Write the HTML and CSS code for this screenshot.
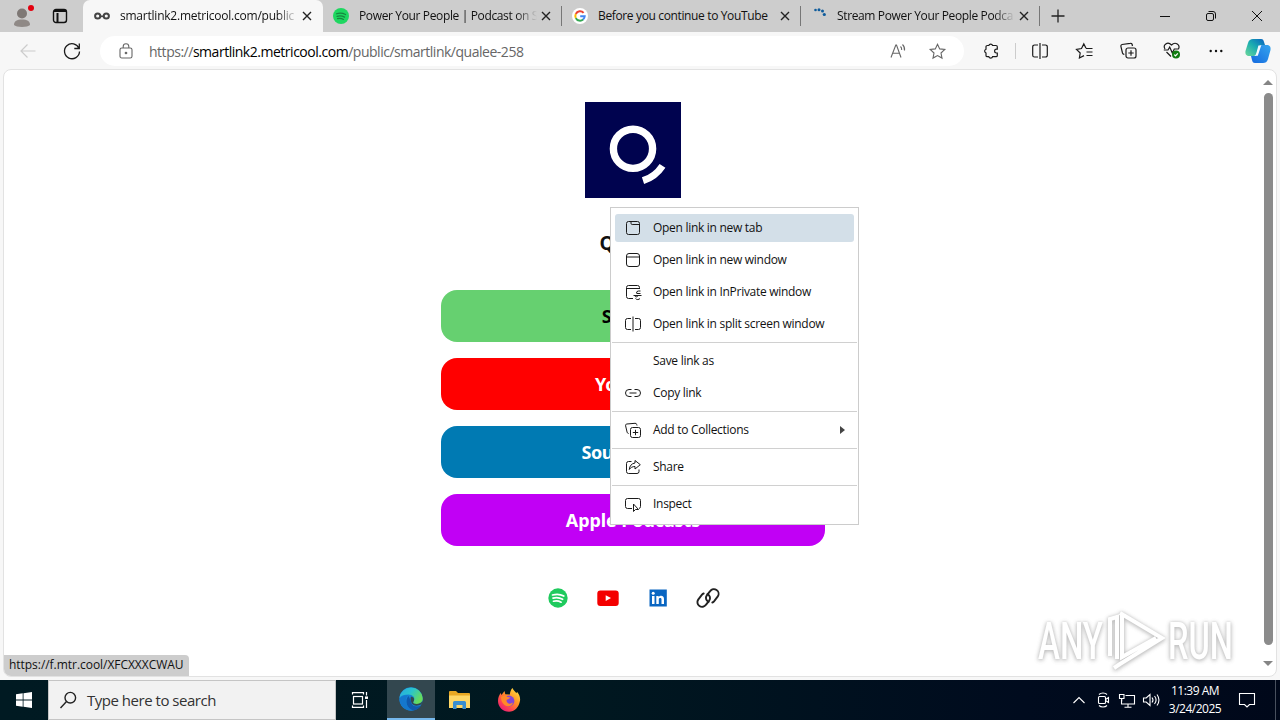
FILE: index.html
```html
<!DOCTYPE html>
<html lang="en">
<head>
    <meta charset="UTF-8">
    <meta name="viewport" content="width=device-width, initial-scale=1.0">
    <title>Qualee</title>
    <link rel="stylesheet" href="styles.css">
</head>
<body>
    <header class="tab-bar">
        <div class="profile">
            <svg width="26" height="26" viewBox="0 0 26 26">
                <circle cx="13" cy="10.500" r="5" fill="#7e7875"/>
                <path d="M5 22c0-4 3-5.500 8-5.500s8 1.500 8 5.500c-2 2.500-14 2.500-16 0z" fill="#8f8986"/>
                <circle cx="22" cy="5" r="3" fill="#e3000f"/>
            </svg>
        </div>
        <div class="tab-actions">
            <svg width="16" height="16" viewBox="0 0 16 16" fill="none" stroke="#111">
                <rect x="1.500" y="1.500" width="13" height="13" rx="2.500" stroke-width="1.400"/>
                <path d="M2 3h12M5.500 5v9" stroke-width="2"/>
            </svg>
        </div>
        <div class="tab active">
            <svg class="favicon" width="16" height="16" viewBox="0 0 16 16" fill="none" stroke="#444" stroke-width="2">
                <circle cx="3.700" cy="8" r="2.600"/>
                <circle cx="12.300" cy="8" r="2.600"/>
                <path d="M6 7.500c1 1.200 3 1.200 4 0" stroke-width="1.600"/>
            </svg>
            <span class="tab-title title-host">smartlink2.metricool.com/public</span>
            <svg class="close" width="10" height="10" viewBox="0 0 10 10"><path d="M1 1l8 8M9 1l-8 8"/></svg>
        </div>
        <div class="tab">
            <svg class="favicon" width="16" height="16" viewBox="0 0 16 16">
                <circle cx="8" cy="8" r="8" fill="#1ed760"/>
                <path d="M3.500 5.800c3-.9 6.500-.6 9 .8M4 8.300c2.600-.7 5.400-.4 7.600.8M4.500 10.700c2.200-.5 4.200-.3 6 .7" fill="none" stroke="#17873f" stroke-width="1.200" stroke-linecap="round"/>
            </svg>
            <span class="tab-title">Power Your People | Podcast on S</span>
            <svg class="close" width="10" height="10" viewBox="0 0 10 10"><path d="M1 1l8 8M9 1l-8 8"/></svg>
        </div>
        <div class="tab">
            <svg class="favicon" width="16" height="16" viewBox="0 0 16 16">
                <circle cx="8" cy="8" r="8" fill="#fff"/>
                <g fill="none" stroke-width="2">
                    <path d="M11.600 4.900A4.700 4.700 0 0 0 3.800 6" stroke="#ea4335"/>
                    <path d="M3.800 6a4.700 4.700 0 0 0 0 4.100" stroke="#fbbc05"/>
                    <path d="M3.800 10.100a4.700 4.700 0 0 0 7.300 1.400" stroke="#34a853"/>
                    <path d="M11.100 11.500A4.700 4.700 0 0 0 12.700 8.300H8.200" stroke="#4285f4"/>
                </g>
            </svg>
            <span class="tab-title title-google">Before you continue to YouTube</span>
            <svg class="close" width="10" height="10" viewBox="0 0 10 10"><path d="M1 1l8 8M9 1l-8 8"/></svg>
        </div>
        <div class="tab">
            <svg class="favicon" width="16" height="16" viewBox="0 0 16 16" fill="#0f5c9c">
                <circle cx="4.500" cy="2" r="1.300"/>
                <circle cx="8" cy="1.700" r="1.500"/>
                <circle cx="11.500" cy="3" r="1.500"/>
                <circle cx="13.300" cy="6.500" r="1.600"/>
            </svg>
            <span class="tab-title">Stream Power Your People Podca</span>
            <svg class="close" width="10" height="10" viewBox="0 0 10 10"><path d="M1 1l8 8M9 1l-8 8"/></svg>
        </div>
        <div class="new-tab">
            <svg width="14" height="14" viewBox="0 0 14 14"><path d="M7 .5v13M.5 7h13" stroke="#222" stroke-width="1.300"/></svg>
        </div>
        <div class="window-buttons">
            <span><svg width="10" height="10" viewBox="0 0 10 10"><path d="M0 5.500h10"/></svg></span>
            <span><svg width="10" height="10" viewBox="0 0 10 10"><rect x=".5" y="2.500" width="7" height="7" rx="1.500"/><path d="M2.500 .5h4.500a2.500 2.500 0 0 1 2.500 2.500v4.500"/></svg></span>
            <span><svg width="10" height="10" viewBox="0 0 10 10"><path d="M0 0l10 10M10 0L0 10"/></svg></span>
        </div>
    </header>

    <nav class="toolbar">
        <div class="tool">
            <svg class="disabled" width="16" height="16" viewBox="0 0 16 16"><path d="M15.500 8H1M7.500 1.500L1 8l6.500 6.500"/></svg>
        </div>
        <div class="tool">
            <svg width="18" height="18" viewBox="0 0 18 18"><path d="M16 6.500A7.500 7.500 0 1 0 16.500 9.500M16.300 1.500v5h-5" stroke-width="1.300"/></svg>
        </div>
        <div class="address">
            <svg class="lock" width="14" height="16" viewBox="0 0 14 16"><rect x="1" y="5" width="12" height="10" rx="1.800"/><path d="M4.200 5V3.500a2.800 2.800 0 0 1 5.600 0V5"/><circle cx="7" cy="10" r=".8" fill="#666"/></svg>
            <span class="url">https://<b>smartlink2.metricool.com</b>/public/smartlink/qualee-258</span>
            <svg class="read-aloud" width="17" height="16" viewBox="0 0 17 16"><path d="M1 14.500L5.800 2h.7L11 14.500M2.700 10.300h6.800M10.500 3.500c1 .9 1.300 2 1.200 3.500M12.500 1.500c1.700 1.600 2.400 3.500 2 6"/></svg>
            <svg class="star" width="17" height="17" viewBox="0 0 17 17"><path d="M8.500 1.200l2.200 4.700 5.100.6-3.800 3.500 1 5.100-4.500-2.500L4 15.100l1-5.100L1.200 6.500l5.100-.6z"/></svg>
        </div>
        <div class="tool extensions">
            <svg width="16" height="16" viewBox="0 0 16 16"><path d="M5.800 2.500A2 2 0 0 1 9.600 2.500H13a1.300 1.300 0 0 1 1.300 1.300V6.200h-.8a1.900 1.900 0 0 0 0 3.800h.8v2.400a1.300 1.300 0 0 1-1.300 1.300H9.600a2 2 0 0 1-3.800 0H4.300A1.300 1.300 0 0 1 3 12.400V10a2 2 0 0 1 0-3.800V3.800a1.300 1.300 0 0 1 1.300-1.300z"/></svg>
        </div>
        <div class="divider"></div>
        <div class="tool">
            <svg width="16" height="16" viewBox="0 0 16 16"><path d="M6 2H2.500A1.800 1.800 0 0 0 .7 3.800v8.400A1.800 1.800 0 0 0 2.500 14H6M10 2h3.500a1.800 1.800 0 0 1 1.800 1.800v8.400a1.800 1.800 0 0 1-1.800 1.800H10M8 0v16"/></svg>
        </div>
        <div class="tool">
            <svg width="17" height="16" viewBox="0 0 17 16"><path d="M10 5.200L7.800.9 5.500 5.500l-5 .8L4.200 10l-.8 5L8 12.600M10 5.500h6.500M10.500 9h6M10.500 12.500h6"/></svg>
        </div>
        <div class="tool">
            <svg width="17" height="17" viewBox="0 0 17 17"><rect x="6" y="6" width="10" height="10" rx="2"/><path d="M11 8.300v5.400M8.300 11h5.400M12.500 4l-.4-1.500A1.500 1.500 0 0 0 10.300 1.300L2 2.500A1.500 1.500 0 0 0 .9 4.300L2.500 11a1.800 1.800 0 0 0 1.800 1.300"/></svg>
        </div>
        <div class="tool">
            <svg width="18" height="17" viewBox="0 0 18 17"><path d="M2 7C-.5 3 4.500-1 8.500 3c4-4 9 0 7 4M.8 8H5l1.700-3 2.600 6 2-4h4.500M3.500 10l4.500 4.500"/><circle cx="13" cy="12.500" r="4" fill="#107c10" stroke="none"/><path d="M11.200 12.600l1.300 1.200 2.300-2.500" stroke="#fff"/></svg>
        </div>
        <div class="tool">
            <svg width="14" height="4" viewBox="0 0 14 4"><g fill="#111" stroke="none"><circle cx="1.700" cy="2" r="1.200"/><circle cx="7" cy="2" r="1.200"/><circle cx="12.300" cy="2" r="1.200"/></g></svg>
        </div>
        <div class="tool copilot">
            <svg width="26" height="24" viewBox="0 0 26 24">
                <defs>
                    <linearGradient id="copilot-left" x1="0" y1="1" x2="1" y2="0">
                        <stop offset="0" stop-color="#6dd89a"/>
                        <stop offset=".5" stop-color="#1badb0"/>
                        <stop offset="1" stop-color="#075fc0"/>
                    </linearGradient>
                    <linearGradient id="copilot-right" x1="0" y1="1" x2="1" y2="0">
                        <stop offset="0" stop-color="#1469df"/>
                        <stop offset="1" stop-color="#35a5ee"/>
                    </linearGradient>
                </defs>
                <g stroke="none">
                    <path d="M8 0h8c2 0 2.500 1 3 3l1 3h-3c-2 0-3 1-3.600 3l-1.700 5c-.6 2-1.500 3-3 3H4c-3 0-4-2.500-3.500-5L3 4C4 1 5.500 0 8 0z" fill="url(#copilot-left)"/>
                    <path d="M18 24h-8c-2 0-2.500-1-3-3l-1-4h3c2 0 3-1 3.600-3l1.700-5c.6-2 1.500-3 3-3H22c3 0 4 2.500 3.500 5L23 20c-1 3-2.500 4-5 4z" fill="url(#copilot-right)"/>
                    <path d="M13.400 6.500h2.800l-3.400 10.300H9.500c1-.5 1.500-1.500 1.900-2.800z" fill="#f4faff"/>
                </g>
            </svg>
        </div>
    </nav>

    <main class="viewport">
        <div class="page">
            <svg class="logo" width="96" height="96" viewBox="0 0 96 96">
                <rect width="96" height="96" fill="#00034f"/>
                <circle cx="48" cy="46.800" r="19.600" fill="none" stroke="#fff" stroke-width="7.400"/>
                <path d="M58 78.700A37 37 0 0 0 77.500 63.800" fill="none" stroke="#fff" stroke-width="7"/>
            </svg>
            <h1>Qualee</h1>
            <div class="links">
                <a class="link spotify">Spotify</a>
                <a class="link youtube">YouTube</a>
                <a class="link soundcloud">SoundCloud</a>
                <a class="link apple">Apple Podcasts</a>
            </div>
            <div class="socials">
                <svg width="24" height="24" viewBox="0 0 24 24">
                    <circle cx="12" cy="12" r="9.700" fill="#1fca5d"/>
                    <path d="M6.500 9c4-1.100 8-.8 11.300 1.100M7 12.100c3.300-.9 6.700-.5 9.600 1.200M7.500 15.200c2.700-.7 5.300-.4 7.600 1" fill="none" stroke="#fff" stroke-width="1.700" stroke-linecap="round"/>
                </svg>
                <svg width="24" height="24" viewBox="0 0 24 24">
                    <rect x="1.300" y="4.500" width="21.400" height="15.500" rx="3" fill="#f40000"/>
                    <path d="M9.700 9.200v5.800l5.300-2.900z" fill="#fff"/>
                </svg>
                <svg width="24" height="24" viewBox="0 0 24 24">
                    <rect x="3.500" y="3.500" width="17.300" height="17" fill="#0a66c2"/>
                    <path d="M6 10h2.500v8H6zM10.300 10h2.400v1.200c1.200-2 5.300-2 5.300 1.800v5h-2.500v-4.500c0-2-2.700-1.900-2.700 0V18h-2.500z" fill="#fff"/>
                    <circle cx="7.200" cy="7.200" r="1.500" fill="#fff"/>
                </svg>
                <svg width="24" height="24" viewBox="0 0 24 24" fill="none" stroke="#222" stroke-width="1.900" stroke-linecap="round">
                    <path d="M12.500 15.900a4.300 4.300 0 0 1-1.700-6.500l3.300-4.200a4.600 4.600 0 0 1 7.700 5.200l-3.800 4.900c-.5.600-1 1-1.700 1.200"/>
                    <path d="M11.500 8.100a4.300 4.300 0 0 1 1.700 6.500l-3.300 4.200a4.600 4.600 0 0 1-7.700-5.200L6 8.700c.5-.6 1-1 1.700-1.200"/>
                </svg>
            </div>
        </div>
        <div class="scrollbar">
            <span class="arrow-up"></span>
            <span class="thumb"></span>
            <span class="arrow-down"></span>
        </div>
        <div class="status">https://f.mtr.cool/XFCXXXCWAU</div>
    </main>

    <footer class="taskbar">
        <div class="task start">
            <svg width="16" height="16" viewBox="0 0 16 16" fill="#fff"><path d="M0 2.200L6.700 1.300v6.300H0zM7.500 1.200L16 0v7.600H7.500zM0 8.400h6.700v6.300L0 13.800zM7.500 8.400H16V16l-8.500-1.200z"/></svg>
        </div>
        <div class="search">
            <svg width="17" height="18" viewBox="0 0 17 18" fill="none" stroke="#222" stroke-width="1.400"><circle cx="10.300" cy="6.700" r="5.300"/><path d="M6.500 10.600L.5 17"/></svg>
            <span>Type here to search</span>
        </div>
        <div class="task">
            <svg width="17" height="16" viewBox="0 0 17 16" fill="none" stroke="#fff" stroke-width="1.200"><rect x="1.500" y="4.500" width="9" height="7.500"/><path d="M.5 2.500V.6h11v1.900M.5 13.500v1.900h11v-1.900M14.500 0v3.500M14.500 8v8"/><path d="M13 5.700h3" stroke-width="2.500"/></svg>
        </div>
        <div class="task open">
            <svg width="24" height="24" viewBox="0 0 24 24">
                <defs>
                    <linearGradient id="edge-top" x1="0" y1="0" x2="1" y2=".5">
                        <stop offset="0" stop-color="#2aa8df"/>
                        <stop offset=".5" stop-color="#29c3cf"/>
                        <stop offset="1" stop-color="#68dc5a"/>
                    </linearGradient>
                </defs>
                <circle cx="12" cy="12" r="11.700" fill="#1583d6"/>
                <path d="M.4 11A11.700 11.700 0 0 1 23.700 11c.3 4-2.700 6-6.200 6-3 0-4-1-3-2.400 2.500-4-1-7-5-7C5.500 7.600 2 8.500.4 11z" fill="url(#edge-top)"/>
                <path d="M9.500 8.200C5 10 5.500 20 14 23.400 8 24.500 1 19.500.4 12c1.800-3 5-4.200 9.100-3.800z" fill="#1577cd"/>
                <path d="M9.500 9c-4 4-2 13 5 14.400 3.500-.6 6-2.500 7.500-5-4 2-8.500 1-9.500-2.200-.7-2.500-1.500-4.500-3-7.200z" fill="#1059ad"/>
                <path d="M12 9.700c2.800 0 4 2.300 2.500 4.900-1 1.400 0 2.400 3 2.400 2.500 0 4.700-1 5.700-2.700l-.5 2.700c-4 2.700-9.200 1.900-10.200-1.200-.6-2-1.500-4.500-.5-6.100z" fill="#33474f"/>
            </svg>
        </div>
        <div class="task">
            <svg width="22" height="20" viewBox="0 0 22 20">
                <path d="M0 2a1 1 0 0 1 1-1h6l2 2h11a1 1 0 0 1 1 1v14H0z" fill="#e9a823"/>
                <path d="M0 5.500h21V18H0z" fill="#ffd766"/>
                <path d="M4 19v-6.500A1.500 1.500 0 0 1 5.500 11h10a1.500 1.500 0 0 1 1.500 1.500V19h-3.500v-4h-6v4z" fill="#398ed0"/>
            </svg>
        </div>
        <div class="task firefox">
            <svg width="24" height="24" viewBox="0 0 24 24">
                <defs>
                    <linearGradient id="fox" x1="1" y1="0" x2=".2" y2="1">
                        <stop offset="0" stop-color="#fff04a"/>
                        <stop offset=".45" stop-color="#ff9524"/>
                        <stop offset=".75" stop-color="#ff4550"/>
                        <stop offset="1" stop-color="#e51a78"/>
                    </linearGradient>
                </defs>
                <path d="M15.500 0c1 2.500 3 3.800 4 5.300l.5-1.500c2.300 2.700 3.500 5.700 3 9-1 6.500-5.500 11-11 11C6 23.800 1 19 1 13c0-3 1-5.500 2.500-8l1 2 3-4 .8 3.200 4.500.3c.3-2.500 1-5 2.700-6.500z" fill="url(#fox)"/>
                <circle cx="12" cy="13" r="5.400" fill="#8145d8"/>
                <path d="M4 9c2-2 5-1.500 6.500 0l3 .6c-1 1.500-3 1.400-4 2.400 0 4 4 4.500 6.500 2.500-1 4-5.500 5-8.500 2.500C5 15 4 12 4 9z" fill="#ff8a28"/>
            </svg>
        </div>
        <div class="tray">
            <svg width="24" height="20" viewBox="0 0 24 20"><path d="M6.500 13L12 7.500l5.500 5.500"/></svg>
            <svg width="24" height="20" viewBox="0 0 24 20"><rect x="7.500" y="6.500" width="7" height="7" rx="1"/><path d="M14.500 9.500l3-2v5l-3-2M8 4.500c2-2 6-2 8 0M8 15.500c2 2 6 2 8 0"/></svg>
            <svg width="24" height="20" viewBox="0 0 24 20"><path d="M10.500 5.500h9v8.500h-13V9.500M13 14v3M9.500 17.200h7M4.500 4.500h4.500v4h-4.500zM6.700 8.500v3"/></svg>
            <svg width="24" height="20" viewBox="0 0 24 20"><path d="M4.500 8h2.700L11 4.500v11L7.200 12H4.500zM13 7.500c1.200 1.500 1.200 3.500 0 5M15.500 6c2 2.500 2 5.500 0 8M18 4.500c2.500 3.500 2.500 7.500 0 11"/></svg>
        </div>
        <div class="clock">
            <span>11:39 AM</span>
            <span>3/24/2025</span>
        </div>
        <div class="notifications">
            <svg width="18" height="18" viewBox="0 0 18 18"><path d="M1.500 2.500h15v11h-5L9 16l-2.500-2.500h-5z"/></svg>
        </div>
        <div class="show-desktop"></div>
    </footer>

    <div class="context-menu">
        <div class="item selected">
            <svg width="16" height="16" viewBox="0 0 16 16"><rect x="1.500" y="1.500" width="13" height="13" rx="2"/><path d="M6 1.500v1.800A1.200 1.200 0 0 0 7.200 4.500h7.300"/></svg>
            <span>Open link in new tab</span>
        </div>
        <div class="item">
            <svg width="16" height="16" viewBox="0 0 16 16"><rect x="1.500" y="1.500" width="13" height="13" rx="2.500"/><path d="M1.500 5h13"/></svg>
            <span>Open link in new window</span>
        </div>
        <div class="item">
            <svg width="16" height="16" viewBox="0 0 16 16"><path d="M8 14.500H3.500a2 2 0 0 1-2-2v-9a2 2 0 0 1 2-2h9a2 2 0 0 1 2 2V5M1.500 4.500h13M15.500 7h-2a2 2 0 0 0-2 2v.5M15.500 9.500h-3.500M8.500 11.500h8M10 12c.3 1.200 2.300 1.200 2.800 0M10.500 14.500c1 1.500 3.500 1.300 4.500 0"/></svg>
            <span>Open link in InPrivate window</span>
        </div>
        <div class="item">
            <svg width="16" height="16" viewBox="0 0 16 16"><path d="M6 2.500H2.500a2 2 0 0 0-2 2v7a2 2 0 0 0 2 2H6M10 2.500h3.500a2 2 0 0 1 2 2v7a2 2 0 0 1-2 2H10M8 .5v15"/></svg>
            <span>Open link in split screen window</span>
        </div>
        <hr>
        <div class="item">
            <svg width="16" height="16"></svg>
            <span>Save link as</span>
        </div>
        <div class="item">
            <svg width="16" height="16" viewBox="0 0 16 16"><path d="M6.500 4.500H4a3.500 3.500 0 0 0 0 7h2.500M9.500 4.500H12a3.500 3.500 0 0 1 0 7H9.500M4.500 8h7"/></svg>
            <span>Copy link</span>
        </div>
        <hr>
        <div class="item">
            <svg width="16" height="16" viewBox="0 0 16 16"><rect x="5.500" y="5.500" width="10" height="10" rx="2"/><path d="M10.500 7.800v5.400M7.800 10.500h5.400M12 3.500l-.3-1A1.500 1.500 0 0 0 10 1.300L1.800 2A1.500 1.500 0 0 0 .6 3.800l1.500 6.400a1.800 1.800 0 0 0 1.500 1.300"/></svg>
            <span>Add to Collections</span>
            <i class="submenu-arrow"></i>
        </div>
        <hr>
        <div class="item">
            <svg width="16" height="16" viewBox="0 0 16 16"><path d="M6.500 2.500h-3a2 2 0 0 0-2 2v8a2 2 0 0 0 2 2h8.500a2 2 0 0 0 2-2v-2M10 1.500l5.300 4.200L10 10V7.500c-2.500 0-4.500 1-5.700 3C4.500 7 6.500 4.500 10 4z"/></svg>
            <span>Share</span>
        </div>
        <hr>
        <div class="item">
            <svg width="16" height="16" viewBox="0 0 16 16"><path d="M7 12.500H2.500a2 2 0 0 1-2-2v-6a2 2 0 0 1 2-2h11a2 2 0 0 1 2 2v6a2 2 0 0 1-1.500 2M8.500 8v7.500l2-2h3z"/></svg>
            <span>Inspect</span>
        </div>
    </div>

    <svg class="watermark" width="204" height="72" viewBox="0 0 204 72">
        <g class="watermark-shape">
            <text x="4" y="53" textLength="65" lengthAdjust="spacingAndGlyphs">ANY</text>
            <text x="134" y="53" textLength="65" lengthAdjust="spacingAndGlyphs">RUN</text>
            <path d="M76 50V13l7-2v42M86 7l42 25-42 26M88 7v44l34-19M86 58l-6 4"/>
        </g>
    </svg>
</body>
</html>
```
FILE: styles.css
```css
/* Reset and base styles */
* {
    margin: 0;
    padding: 0;
    box-sizing: border-box;
}
body {
    width: 1280px;
    height: 720px;
    overflow: hidden;
    position: relative;
    display: flex;
    flex-direction: column;
    font-family: "Open Sans", "Noto Sans", sans-serif;
    font-size: 12px;
    color: #111;
    background: #f7f7f7;
}
svg {
    display: block;
    flex-shrink: 0;
    overflow: visible;
}

/* Tab bar */
.tab-bar {
    height: 32px;
    display: flex;
    background: #cdcdcd;
}
.profile {
    width: 44px;
    display: flex;
    align-items: center;
    justify-content: center;
}
.tab-actions {
    width: 39px;
    padding-left: 8px;
    display: flex;
    align-items: center;
}
.tab {
    width: 239px;
    padding: 0 10px;
    display: flex;
    align-items: center;
    border-right: 1px solid #777;
    border-image: linear-gradient(transparent 20%, #777 20%, #777 80%, transparent 80%) 1;
}
.tab.active {
    width: 240px;
    padding: 0 11px;
    background: #f7f7f7;
    border: none;
    border-radius: 7px 7px 0 0;
}
.tab-title {
    width: 179px;
    margin-left: 10px;
    padding-bottom: 1px;
    overflow: hidden;
    white-space: nowrap;
    letter-spacing: -0.36px;
    -webkit-mask-image: linear-gradient(to right, #000 88%, transparent);
    mask-image: linear-gradient(to right, #000 88%, transparent);
}
.title-host {
    width: 178px;
    letter-spacing: -0.23px;
}
.title-google {
    -webkit-mask-image: none;
    mask-image: none;
}
.close {
    margin-left: 4px;
    stroke: #222;
    stroke-width: 1.4;
}
.new-tab {
    width: 36px;
    display: flex;
    align-items: center;
    justify-content: center;
}
.window-buttons {
    margin-left: auto;
    display: flex;
}
.window-buttons span {
    width: 46px;
    display: flex;
    align-items: center;
    justify-content: center;
}
.window-buttons svg {
    fill: none;
    stroke: #111;
}

/* Toolbar */
.toolbar {
    height: 37px;
    padding-left: 6px;
    display: flex;
    align-items: center;
}
.tool {
    width: 44px;
    display: flex;
    justify-content: center;
}
.tool svg {
    fill: none;
    stroke: #1b1b1b;
    stroke-width: 1.2;
}
.tool .disabled {
    stroke: #ccc;
}
.tool.copilot {
    width: 40px;
}
.tool.copilot svg {
    margin-top: 1px;
}
.address {
    width: 864px;
    height: 30px;
    margin: 1px 5px 0 6px;
    padding: 0 18px 0 19px;
    display: flex;
    align-items: center;
    background: #fff;
    border-radius: 15px;
}
.address svg {
    fill: none;
    stroke: #666;
    stroke-width: 1.1;
}
.url {
    margin: 0 auto 0 16px;
    font-size: 14px;
    letter-spacing: -0.48px;
    color: #666;
}
.url b {
    font-weight: normal;
    color: #000;
}
.star {
    margin-left: 22px;
}
.divider {
    width: 1px;
    height: 16px;
    margin: 0 2px;
    background: #ccc;
}

/* Page viewport */
.viewport {
    height: 608px;
    margin: 0 3px 3px;
    display: flex;
    position: relative;
    background: #fff;
    border: 1px solid #e2e2e2;
    border-radius: 8px;
    overflow: hidden;
}
.page {
    width: 1258px;
    padding-top: 32px;
    display: flex;
    flex-direction: column;
    align-items: center;
    font-family: "Noto Sans", "Open Sans", sans-serif;
}
h1 {
    margin: 31px 0 32px;
    font-size: 19px;
    line-height: 29px;
    font-weight: 700;
}
.links {
    display: flex;
    flex-direction: column;
    gap: 16px;
}
.link {
    width: 384px;
    height: 52px;
    padding-bottom: 1px;
    display: flex;
    align-items: center;
    justify-content: center;
    font-size: 18px;
    font-weight: 700;
    letter-spacing: -0.1px;
    color: #fff;
    border-radius: 16px;
}
.spotify {
    background: #66d070;
    color: #000;
}
.youtube {
    background: #f00;
}
.soundcloud {
    background: #007ab3;
    letter-spacing: -0.4px;
}
.apple {
    background: #c100f5;
}
.socials {
    margin-top: 40px;
    display: flex;
    gap: 26px;
}
.scrollbar {
    width: 14px;
    padding: 10px 3px 9px 1px;
    display: flex;
    flex-direction: column;
    align-items: center;
}
.thumb {
    width: 9px;
    height: 552px;
    margin: 8px 0 16px;
    background: #8b8b8b;
    border-radius: 5px;
}
.arrow-up, .arrow-down {
    border: 5px solid transparent;
    border-top: none;
    border-bottom: 5px solid #858585;
}
.arrow-down {
    transform: rotate(180deg);
}
.status {
    position: absolute;
    left: 0;
    bottom: 0;
    width: 185px;
    height: 21px;
    padding-left: 5px;
    line-height: 20px;
    letter-spacing: -0.04px;
    background: #cdcdcd;
    border-top-right-radius: 4px;
}

/* Taskbar */
.taskbar {
    height: 40px;
    display: flex;
    background: linear-gradient(to right, #001a22, #001820 45%, #000b1e 80%, #00081a);
    color: #fff;
}
.task {
    width: 49px;
    display: flex;
    align-items: center;
    justify-content: center;
}
.start {
    width: 48px;
}
.search {
    width: 288px;
    padding-left: 11px;
    display: flex;
    align-items: center;
    gap: 10px;
    font-size: 15px;
    letter-spacing: -0.48px;
    color: #333;
    background: #f2f2f2;
    border: 1px solid #c5c5c5;
}
.search + .task {
    width: 51px;
    padding-right: 2px;
}
.task.open {
    width: 48px;
    background: #33474f;
    border-bottom: 2px solid #76b9ed;
}
.tray {
    margin-left: auto;
    display: flex;
    align-items: center;
}
.tray svg, .notifications svg {
    fill: none;
    stroke: #fff;
    stroke-width: 1.1;
}
.clock {
    width: 64px;
    display: flex;
    flex-direction: column;
    justify-content: center;
    align-items: center;
    line-height: 18px;
    letter-spacing: -0.5px;
}
.notifications {
    width: 40px;
    display: flex;
    align-items: center;
    justify-content: center;
}
.show-desktop {
    width: 5px;
    margin-left: 8px;
    border-left: 1px solid #48505e;
}

/* Context menu */
.context-menu {
    position: absolute;
    left: 610px;
    top: 207px;
    width: 249px;
    height: 318px;
    padding: 4px 0;
    display: flex;
    flex-direction: column;
    background: #fff;
    border: 1px solid #ccc;
}
.item {
    height: 28px;
    margin: 2px 4px;
    padding: 0 9px 0 10px;
    display: flex;
    align-items: center;
    gap: 12px;
    letter-spacing: -0.29px;
    border-radius: 3px;
}
.item svg {
    fill: none;
    stroke: #1b1b1b;
}
.item span {
    padding-bottom: 1px;
}
.item.selected {
    background: #d3dfe8;
}
.context-menu hr {
    height: 1px;
    margin: 2px 1px;
    border: none;
    background: #d0d0d0;
}
.submenu-arrow {
    margin-left: auto;
    border: 4px solid transparent;
    border-left: 5px solid #444;
    border-right: none;
}

/* Watermark */
.watermark {
    position: absolute;
    left: 1034px;
    top: 606px;
}
.watermark-shape {
    filter: drop-shadow(0 1px 2px #bbb) drop-shadow(0 0 1px #ddd);
}
.watermark text {
    font-family: Roboto, sans-serif;
    font-size: 52px;
    font-weight: 500;
    fill: #fff;
}
.watermark path {
    fill: none;
    stroke: #fff;
    stroke-width: 4;
}
```
